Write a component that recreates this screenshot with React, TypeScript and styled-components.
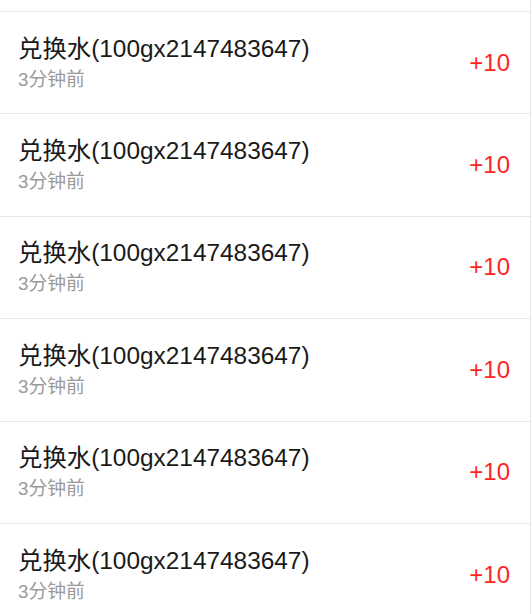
import React from 'react';
import styled, { createGlobalStyle } from 'styled-components';

const GlobalStyle = createGlobalStyle`
  html, body {
    margin: 0;
    padding: 0;
    background: #ffffff;
  }
  body {
    font-family: "Liberation Sans", Arial, "Noto Sans CJK SC", sans-serif;
  }
`;

const Page = styled.div`
  width: 530px;
  border-right: 1px solid #e6e6e6;
  background: #ffffff;
  min-height: 614px;
`;

const TopEdge = styled.div`
  height: 11px;
  border-bottom: 1px solid #e6e6e6;
`;

const Row = styled.div`
  box-sizing: border-box;
  height: 102.4px;
  display: flex;
  align-items: center;
  justify-content: space-between;
  padding: 0 20px 0 18px;
  border-bottom: 1px solid #e6e6e6;
`;

const Info = styled.div`
  display: flex;
  flex-direction: column;
  padding-top: 2px;
`;

const Title = styled.div`
  font-size: 24.4px;
  line-height: 32px;
  color: #1a1a1a;
`;

const Time = styled.div`
  font-size: 18.8px;
  line-height: 30px;
  color: #9a9a9a;
`;

const Points = styled.div<{ $positive: boolean }>`
  font-size: 24px;
  color: ${(p) => (p.$positive ? '#ff2424' : '#1a1a1a')};
`;

const records = Array.from({ length: 6 }, (_, i) => ({
  id: i,
  title: '兑换水(100gx2147483647)',
  time: '3分钟前',
  points: 10,
}));

const App: React.FC = () => {
  return (
    <>
      <GlobalStyle />
      <Page>
        <TopEdge />
        {records.map((r) => (
          <Row key={r.id}>
            <Info>
              <Title>{r.title}</Title>
              <Time>{r.time}</Time>
            </Info>
            <Points $positive={r.points > 0}>
              {r.points > 0 ? `+${r.points}` : r.points}
            </Points>
          </Row>
        ))}
      </Page>
    </>
  );
};

export default App;
